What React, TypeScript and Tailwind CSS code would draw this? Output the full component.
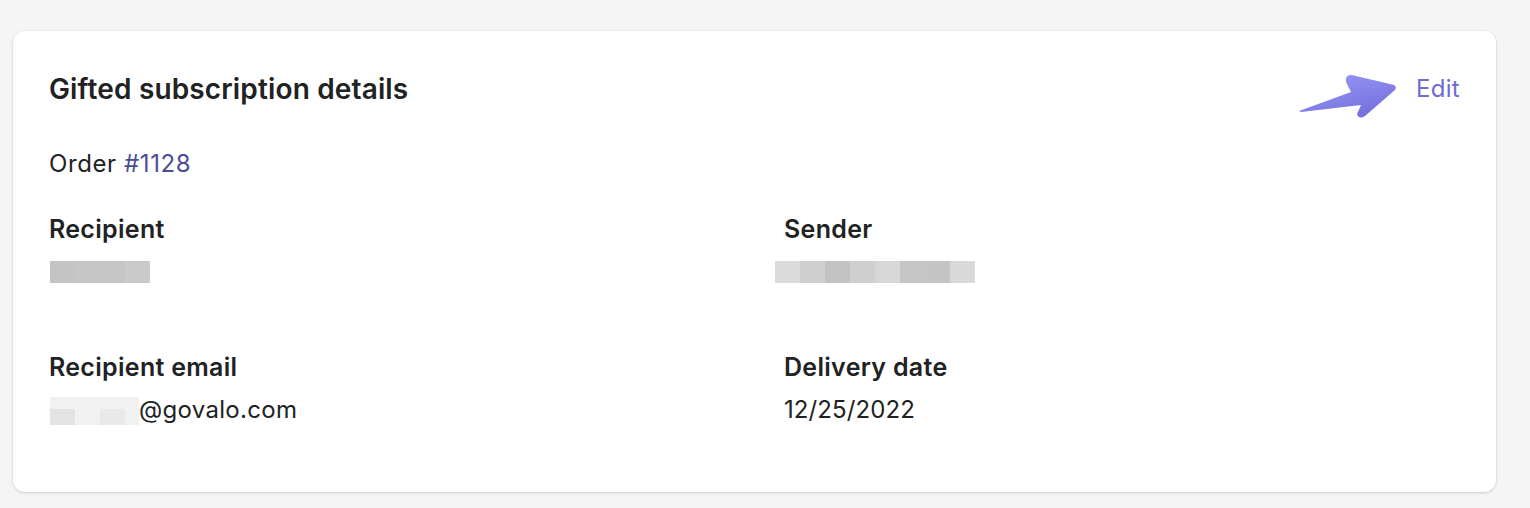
import React from "react";

function Blocks({ colors, className }: { colors: string[]; className?: string }) {
  return (
    <div className={"flex " + (className ?? "")}>
      {colors.map((c, i) => (
        <div key={i} className="h-[22px] w-[25px]" style={{ background: c }} />
      ))}
    </div>
  );
}

export default function App() {
  return (
    <div className="min-h-[508px] w-[1530px] bg-[#f5f5f5] pl-[13px] pt-[31px] font-['Inter',sans-serif] text-[#202223]">
      <div className="relative h-[461px] w-[1483px] rounded-[12px] bg-white px-[36px] pt-[40px] shadow-[0_1px_3px_rgba(0,0,0,0.15),0_0_0_1px_rgba(0,0,0,0.02)]">
        <div className="flex h-[36px] items-center justify-between">
          <h2 className="text-[28px] font-semibold leading-[36px] tracking-[0.15px]">Gifted subscription details</h2>
          <div className="relative flex h-[36px] items-center">
            <svg className="absolute left-[-121px] top-[-3px]" width="110" height="56" viewBox="0 0 110 56">
              <defs>
                <linearGradient id="ag" x1="0" y1="0" x2="0.6" y2="1">
                  <stop offset="0" stopColor="#9a9cf7" />
                  <stop offset="1" stopColor="#7670de" />
                </linearGradient>
              </defs>
              <path
                d="M4 43 L56 24 L51 14 Q50 6 57 7 L99 17 Q102 19 100 22 L70 48 Q64 52 62 46 L66 37 L6 44 Z"
                fill="url(#ag)"
              />
            </svg>
            <span className="text-[24px] leading-[30px] tracking-[0.3px] text-[#6d6dd0]">Edit</span>
          </div>
        </div>

        <div className="mt-[41px] text-[24px] leading-[32px] tracking-[0.6px]">
          Order <span className="text-[#4c4c96]">#1128</span>
        </div>

        <div className="mt-[33px] grid grid-cols-[735px_1fr]">
          <div>
            <div className="text-[25px] font-semibold leading-[32px] tracking-[0.3px]">Recipient</div>
            <Blocks className="mt-[16px] ml-[1px]" colors={["#c3c4c3", "#c6c6c6", "#c6c6c6", "#c9cac9"]} />
          </div>
          <div>
            <div className="text-[25px] font-semibold leading-[32px] tracking-[0.3px]">Sender</div>
            <Blocks
              className="mt-[16px] ml-[-9px]"
              colors={["#dadada", "#cfcfcf", "#c2c2c2", "#cfcfcf", "#d7d7d7", "#c6c6c6", "#c5c5c5", "#d8d9d8"]}
            />
          </div>
          <div className="mt-[68px]">
            <div className="text-[25px] font-semibold leading-[32px] tracking-[0.3px]">Recipient email</div>
            <div className="mt-[11px] flex items-center text-[24px] leading-[32px] tracking-[0.3px]">
              <div className="relative ml-[1px] h-[32px] w-[89px]">
                <div className="absolute bottom-[1px] left-0 right-0 top-[3px] bg-[#f1f1f1]" />
                <div className="absolute bottom-[1px] left-0 h-[16px] w-[25px] bg-[#e3e3e3]" />
                <div className="absolute bottom-[1px] left-[50px] h-[16px] w-[25px] bg-[#e9e9e9]" />
              </div>
              <span>@govalo.com</span>
            </div>
          </div>
          <div className="mt-[68px]">
            <div className="text-[25px] font-semibold leading-[32px] tracking-[0.3px]">Delivery date</div>
            <div className="mt-[11px] text-[24px] leading-[32px] tracking-[0.1px]">12/25/2022</div>
          </div>
        </div>
      </div>
    </div>
  );
}
